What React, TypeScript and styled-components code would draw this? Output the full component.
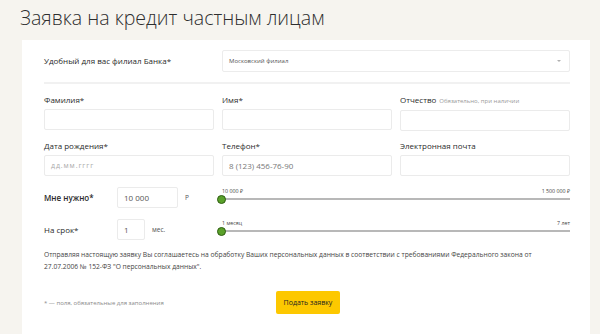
import React from "react";
import styled, { createGlobalStyle } from "styled-components";

const GlobalStyle = createGlobalStyle`
  html, body { margin: 0; padding: 0; }
  body {
    background: #f6f4ef;
    font-family: "Open Sans", "Liberation Sans", Arial, sans-serif;
    color: #333;
    overflow: hidden;
  }
`;

const Page = styled.div`
  width: 600px;
  height: 334px;
  display: flex;
  flex-direction: column;
`;

const Title = styled.h1`
  margin: 0;
  padding: 3px 0 0 20px;
  height: 40px;
  box-sizing: border-box;
  font-family: "Open Sans", "Liberation Sans", sans-serif;
  font-weight: 300;
  font-size: 19.6px;
  line-height: 30px;
  color: #2e2e2e;
`;

const Card = styled.div`
  margin-left: 22px;
  width: 568px;
  flex: 1;
  background: #fff;
  box-sizing: border-box;
  padding: 10px 20px 0 22px;
  display: flex;
  flex-direction: column;
`;

const BranchRow = styled.div`
  display: flex;
  align-items: center;
  height: 22px;
`;

const Label = styled.div<{ $bold?: boolean; $w?: number }>`
  font-size: 8px;
  line-height: 10px;
  color: #2a2a2a;
  font-weight: ${(p) => (p.$bold ? 600 : 400)};
  width: ${(p) => (p.$w ? `${p.$w}px` : "auto")};
  flex-shrink: 0;
  white-space: nowrap;
`;

const Hint = styled.span`
  font-size: 6px;
  color: #9a9a9a;
  margin-left: 3px;
`;

const Select = styled.div`
  flex: 1;
  height: 22px;
  box-sizing: border-box;
  border: 1px solid #ececec;
  border-radius: 2px;
  display: flex;
  align-items: center;
  justify-content: space-between;
  padding: 0 8px 0 6px;
  font-size: 6px;
  color: #555;
`;

const Caret = styled.span`
  width: 0;
  height: 0;
  border-left: 2px solid transparent;
  border-right: 2px solid transparent;
  border-top: 2.5px solid #b0b0b0;
`;

const Divider = styled.div`
  height: 2px;
  background: #f1f1f1;
  margin: 10px 0 0;
`;

const Grid = styled.div<{ $top: number }>`
  display: grid;
  grid-template-columns: 170px 170px 170px;
  column-gap: 8px;
  margin-top: ${(p) => p.$top}px;
`;

const Field = styled.div`
  display: flex;
  flex-direction: column;
  gap: 4px;
`;

const Input = styled.div<{ $w?: number }>`
  height: 21px;
  width: ${(p) => (p.$w ? `${p.$w}px` : "auto")};
  box-sizing: border-box;
  border: 1px solid #ebebeb;
  border-radius: 2px;
  display: flex;
  align-items: center;
  padding: 0 0 0 6px;
  font-size: 8px;
  color: #555;
  flex-shrink: 0;
`;

const Placeholder = styled.span<{ $small?: boolean }>`
  color: ${(p) => (p.$small ? "#aaa" : "#777")};
  font-size: ${(p) => (p.$small ? "7px" : "8px")};
  letter-spacing: ${(p) => (p.$small ? "0.9px" : "0")};
`;

const RangeRow = styled.div<{ $top: number }>`
  display: flex;
  align-items: center;
  margin-top: ${(p) => p.$top}px;
  height: 21px;
`;

const Unit = styled.div<{ $w: number }>`
  width: ${(p) => p.$w}px;
  padding-left: 7px;
  box-sizing: border-box;
  font-size: 6.5px;
  color: #555;
  flex-shrink: 0;
`;

const Slider = styled.div`
  flex: 1;
  display: flex;
  flex-direction: column;
  margin-top: -7px;
`;

const SliderLabels = styled.div`
  display: flex;
  justify-content: space-between;
  font-size: 5.3px;
  line-height: 7px;
  color: #444;
  padding: 0 0 0 4px;
`;

const Track = styled.div`
  position: relative;
  height: 2px;
  background: #b8b8b8;
  margin-top: 3px;
`;

const Thumb = styled.div`
  position: absolute;
  left: -1px;
  top: 50%;
  width: 7px;
  height: 7px;
  margin-top: -4.5px;
  border-radius: 50%;
  background: #5aa12a;
  border: 1px solid #2f5e12;
`;

const Notice = styled.p`
  margin: 9px 0 0;
  max-width: 515px;
  font-size: 6.7px;
  line-height: 12px;
  color: #444;
`;

const Footer = styled.div`
  display: flex;
  align-items: center;
  margin-top: 18px;
`;

const Footnote = styled.div`
  width: 232px;
  font-size: 6px;
  color: #8a8a8a;
`;

const Button = styled.button`
  width: 64px;
  height: 23px;
  border: none;
  border-radius: 2px;
  background: #fdc800;
  font-family: inherit;
  font-size: 7px;
  color: #222;
  padding: 0;
`;

export default function App() {
  return (
    <Page>
      <GlobalStyle />
      <Title>Заявка на кредит частным лицам</Title>
      <Card>
        <BranchRow>
          <Label $w={178}>Удобный для вас филиал Банка*</Label>
          <Select>
            <span>Московский филиал</span>
            <Caret />
          </Select>
        </BranchRow>
        <Divider />
        <Grid $top={11}>
          <Field>
            <Label>Фамилия*</Label>
            <Input />
          </Field>
          <Field>
            <Label>Имя*</Label>
            <Input />
          </Field>
          <Field>
            <Label>
              Отчество<Hint>Обязательно, при наличии</Hint>
            </Label>
            <Input />
          </Field>
        </Grid>
        <Grid $top={10}>
          <Field>
            <Label>Дата рождения*</Label>
            <Input>
              <Placeholder $small>дд.мм.гггг</Placeholder>
            </Input>
          </Field>
          <Field>
            <Label>Телефон*</Label>
            <Input>
              <Placeholder>8 (123) 456-76-90</Placeholder>
            </Input>
          </Field>
          <Field>
            <Label>Электронная почта</Label>
            <Input />
          </Field>
        </Grid>
        <RangeRow $top={11}>
          <Label $bold $w={73}>Мне нужно*</Label>
          <Input $w={61}>10 000</Input>
          <Unit $w={40}>Р</Unit>
          <Slider>
            <SliderLabels>
              <span>10 000 ₽</span>
              <span>1 500 000 ₽</span>
            </SliderLabels>
            <Track>
              <Thumb />
            </Track>
          </Slider>
        </RangeRow>
        <RangeRow $top={11}>
          <Label $w={73}>На срок*</Label>
          <Input $w={28}>1</Input>
          <Unit $w={73}>мес.</Unit>
          <Slider>
            <SliderLabels>
              <span>1 месяц</span>
              <span>7 лет</span>
            </SliderLabels>
            <Track>
              <Thumb />
            </Track>
          </Slider>
        </RangeRow>
        <Notice>
          Отправляя настоящую заявку Вы соглашаетесь на обработку Ваших персональных данных в
          соответствии с требованиями Федерального закона от 27.07.2006 № 152-ФЗ "О персональных
          данных".
        </Notice>
        <Footer>
          <Footnote>* — поля, обязательные для заполнения</Footnote>
          <Button>Подать заявку</Button>
        </Footer>
      </Card>
    </Page>
  );
}
